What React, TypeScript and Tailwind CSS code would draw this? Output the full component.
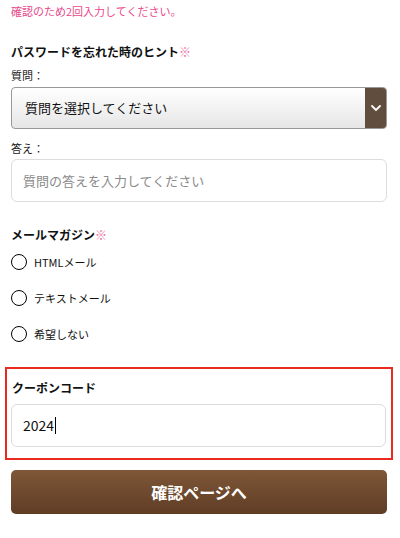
const jp = { fontFamily: '"Noto Sans CJK JP", "Noto Sans", sans-serif' };

function Radio({ label }: { label: string }) {
  return (
    <label className="flex h-9 items-center gap-[7px]">
      <span className="h-[16px] w-[16px] rounded-full border-[1.5px] border-black bg-white" />
      <span className="text-[11px] text-[#111]">{label}</span>
    </label>
  );
}

export default function App() {
  return (
    <div className="min-h-[538px] w-[400px] bg-white pl-[11px] pr-[13px] text-[#111]" style={jp}>
      <p className="h-5 pt-[1px] text-[11px] leading-5 text-[#e9488b]">確認のため2回入力してください。</p>

      <h2 className="mt-[22px] h-5 text-[12px] font-bold leading-5">
        パスワードを忘れた時のヒント<span className="text-[#f06aa0]">※</span>
      </h2>
      <p className="mt-[3px] h-5 text-[11px] leading-5 text-[#222]">質問：</p>
      <div className="mt-[2px] flex h-[42px] overflow-hidden rounded-[4px] border border-[#999] bg-gradient-to-b from-white to-[#e6e6e6]">
        <span className="flex flex-1 items-center pl-[13px] text-[13px]">質問を選択してください</span>
        <span className="flex w-[21px] items-center justify-center bg-[#614d3e]">
          <svg width="10" height="6" viewBox="0 0 10 6" fill="none">
            <path d="M1 1l4 4 4-4" stroke="#fff" strokeWidth="1.8" strokeLinecap="round" strokeLinejoin="round" />
          </svg>
        </span>
      </div>

      <p className="mt-[9px] h-5 text-[11px] leading-5 text-[#222]">答え：</p>
      <div className="mt-[1px] flex h-[43px] items-center rounded-[6px] border border-[#dcdcdc] pl-[11px] text-[13px] text-[#8a8a8a]">
        質問の答えを入力してください
      </div>

      <h2 className="mt-[24px] h-[18px] text-[12px] font-bold leading-[18px]">
        メールマガジン<span className="text-[#f06aa0]">※</span>
      </h2>
      <Radio label="HTMLメール" />
      <Radio label="テキストメール" />
      <Radio label="希望しない" />

      <div className="mx-[-6px] mt-[15px] border-2 border-[#ea2a1f] pb-[11px] pl-[4px] pr-[5px] pt-[9px]">
        <h2 className="h-5 pl-[1px] text-[12px] font-bold leading-5">クーポンコード</h2>
        <div className="mt-[6px] flex h-[43px] items-center rounded-[6px] border border-[#dcdcdc] pl-[11px] text-[14px]">
          2024
          <span className="ml-[1px] h-[17px] w-px bg-black" />
        </div>
      </div>

      <button className="mt-[10px] flex h-[44px] w-full items-center justify-center rounded-[5px] bg-gradient-to-b from-[#7f5738] to-[#5f3d25] text-[16px] font-bold text-white">
        確認ページへ
      </button>
    </div>
  );
}
